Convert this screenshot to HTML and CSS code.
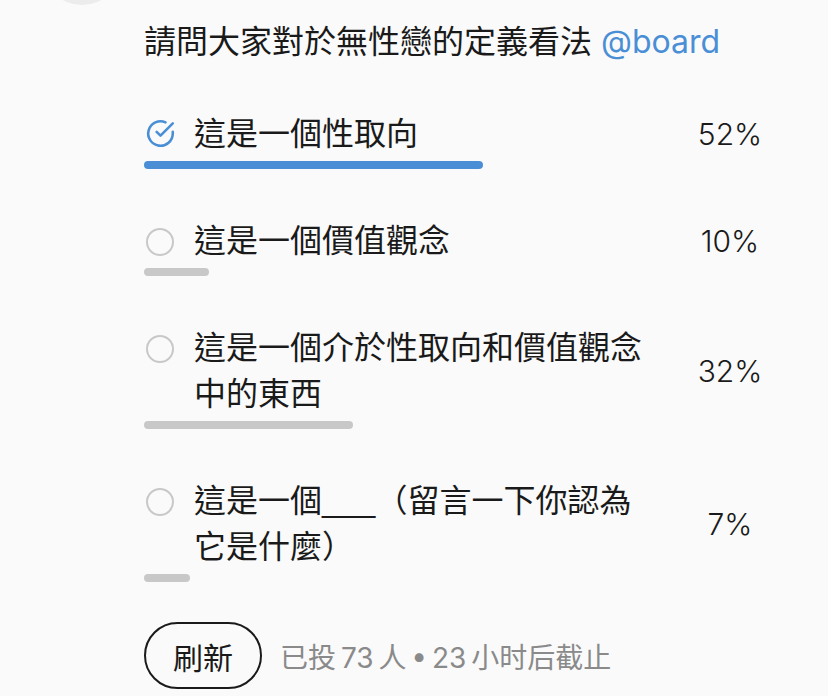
FILE: index.html
```html
<!DOCTYPE html>
<html lang="zh-TW">
<head>
    <meta charset="UTF-8">
    <meta name="viewport" content="width=device-width, initial-scale=1.0">
    <title>投票</title>
    <link rel="stylesheet" href="styles.css">
</head>
<body>
    <div class="post">
        <div class="avatar"></div>
        <div class="content">
            <div class="title">請問大家對於無性戀的定義看法 <span class="mention">@board</span></div>

            <div class="poll">
                <div class="option">
                    <div class="row">
                        <svg class="icon" viewBox="0 0 24 24" fill="none" stroke="#4a8fd6" stroke-width="2" stroke-linecap="round" stroke-linejoin="round">
                            <path d="M21.5 10.6V12a9.5 9.5 0 1 1-5.6-8.66"/>
                            <polyline points="21.5 4.2 12 13.7 9 10.7"/>
                        </svg>
                        <div class="label">這是一個性取向</div>
                        <div class="pct">52%</div>
                    </div>
                    <div class="bar voted" style="width: 52%"></div>
                </div>

                <div class="option">
                    <div class="row">
                        <span class="radio"></span>
                        <div class="label">這是一個價值觀念</div>
                        <div class="pct">10%</div>
                    </div>
                    <div class="bar" style="width: 10%"></div>
                </div>

                <div class="option">
                    <div class="row">
                        <span class="radio"></span>
                        <div class="label">這是一個介於性取向和價值觀念中的東西</div>
                        <div class="pct">32%</div>
                    </div>
                    <div class="bar" style="width: 32%"></div>
                </div>

                <div class="option">
                    <div class="row">
                        <span class="radio"></span>
                        <div class="label">這是一個<span class="blank">___</span>（留言一下你認為它是什麼）</div>
                        <div class="pct">7%</div>
                    </div>
                    <div class="bar" style="width: 7%"></div>
                </div>
            </div>

            <div class="footer">
                <button class="refresh">刷新</button>
                <span class="meta">已投 73 人 • 23 小时后截止</span>
            </div>
        </div>
    </div>
</body>
</html>
```

FILE: styles.css
```css
body {
    margin: 0;
    background-color: #fafafa;
    color: #1a1a1a;
    font-family: Inter, "Noto Sans CJK TC", sans-serif;
}
.post {
    display: grid;
    grid-template-columns: 144px 652px;
    align-items: start;
}
.avatar {
    width: 80px;
    height: 80px;
    margin: -75px 0 0 42px;
    border-radius: 50%;
    background-color: #ececec;
}
.content {
    padding-top: 20px;
}
.title {
    font-size: 32px;
    line-height: 44px;
}
.mention {
    color: #4a8fd6;
}
.poll {
    display: flex;
    flex-direction: column;
    gap: 49px;
    margin-top: 47px;
}
.row {
    display: grid;
    grid-template-columns: 50px 1fr 132px;
    align-items: center;
}
.icon {
    width: 31px;
    height: 31px;
    align-self: start;
    margin: 7px 0 0 1px;
}
.radio {
    width: 24px;
    height: 24px;
    align-self: start;
    margin: 10px 0 0 2px;
    border: 2px solid #c8c8c8;
    border-radius: 50%;
}
.label {
    padding-right: 12px;
    font-size: 32px;
    line-height: 46px;
}
.blank {
    font-family: "Liberation Sans", sans-serif;
}
.pct {
    text-align: center;
    font-size: 30px;
    font-weight: 300;
}
.bar {
    height: 8px;
    margin-top: 4px;
    border-radius: 4px;
    background-color: #c8c8c8;
}
.bar.voted {
    background-color: #4a8fd6;
}
.footer {
    display: flex;
    align-items: center;
    gap: 18px;
    margin-top: 40px;
}
.refresh {
    width: 118px;
    height: 67px;
    border: 2px solid #1a1a1a;
    border-radius: 34px;
    background: none;
    color: #1a1a1a;
    font-family: inherit;
    font-size: 30px;
    padding: 0;
}
.meta {
    color: #8a8a8a;
    font-size: 28px;
    word-spacing: -3px;
}
```
